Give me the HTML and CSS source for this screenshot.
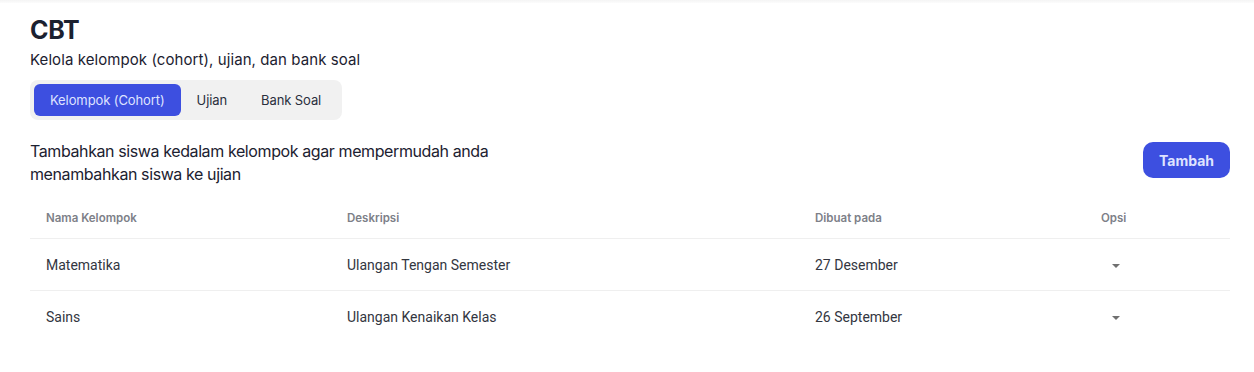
FILE: index.html
```html
<!DOCTYPE html>
<html lang="id">
<head>
<meta charset="utf-8">
<title>CBT</title>
<link rel="stylesheet" href="styles.css">
</head>
<body>
<div class="topbar"></div>
<main class="page">
  <h1 class="title">CBT</h1>
  <p class="subtitle">Kelola kelompok (cohort), ujian, dan bank soal</p>
  <nav class="tabs">
    <button class="tab active">Kelompok (Cohort)</button>
    <button class="tab">Ujian</button>
    <button class="tab">Bank Soal</button>
  </nav>
  <section class="intro">
    <p class="intro-text">Tambahkan siswa kedalam kelompok agar mempermudah anda menambahkan siswa ke ujian</p>
    <button class="btn-add">Tambah</button>
  </section>
  <div class="table">
    <div class="row head">
      <div class="cell c1">Nama Kelompok</div>
      <div class="cell c2">Deskripsi</div>
      <div class="cell c3">Dibuat pada</div>
      <div class="cell c4">Opsi</div>
    </div>
    <div class="row">
      <div class="cell c1">Matematika</div>
      <div class="cell c2">Ulangan Tengan Semester</div>
      <div class="cell c3">27 Desember</div>
      <div class="cell c4"><span class="caret"></span></div>
    </div>
    <div class="row last">
      <div class="cell c1">Sains</div>
      <div class="cell c2">Ulangan Kenaikan Kelas</div>
      <div class="cell c3">26 September</div>
      <div class="cell c4"><span class="caret"></span></div>
    </div>
  </div>
</main>
</body>
</html>
```
FILE: styles.css
```css
* { box-sizing: border-box; }
html, body { margin: 0; padding: 0; background: #fff; }
body { font-family: "Inter", "Noto Sans", sans-serif; color: #1c2130; }
.topbar { height: 3px; background: linear-gradient(#f4f4f4, #fcfcfc); }
.page { padding: 12px 24px 0 30px; }
.title { margin: 0; font-size: 25px; font-weight: 700; line-height: 30px; letter-spacing: -0.3px; color: #1b2130; }
.subtitle { margin: 5px 0 0; font-size: 15px; line-height: 20px; color: #1c2130; letter-spacing: 0.08px; }
.tabs { display: inline-flex; margin-top: 10px; padding: 4px; background: #f1f1f1; border-radius: 8px; gap: 0; }
.tab { border: 0; background: transparent; font-family: inherit; font-size: 13px; color: #2a2f3d; height: 32px; padding: 0 16px; border-radius: 6px; letter-spacing: -0.1px; }
.tab.active { background: #3d4fe0; color: #dfe3ff; }
.tabs .tab:nth-child(2) { padding: 0 18px 0 16px; }
.tabs .tab:nth-child(3) { padding: 0 17px 0 16px; }
.intro { display: flex; justify-content: space-between; align-items: flex-start; margin-top: 20px; width: 1200px; }
.intro-text { margin: 0; width: 480px; font-size: 16px; line-height: 23px; color: #1c2130; letter-spacing: -0.4px; }
.btn-add { border: 0; background: #3d4fe0; color: #dfe3ff; font-family: inherit; font-weight: 700; font-size: 14px; height: 36px; padding: 0 16px; border-radius: 10px; margin-top: 2px; }
.table { width: 1200px; margin-top: 12px; }
.row { display: grid; grid-template-columns: 301px 468px 286px 145px; height: 52px; align-items: center; border-bottom: 1px solid #efefef; }
.row.head { height: 41px; }
.row.last { border-bottom: 0; }
.cell { padding-left: 16px; font-family: "Roboto", sans-serif; font-size: 14px; color: #33363f; }
.head .cell { font-family: "Inter", sans-serif; font-size: 11.5px; font-weight: 600; color: #7d8088; }
.caret { display: inline-block; margin-left: 11px; width: 0; height: 0; border-left: 4px solid transparent; border-right: 4px solid transparent; border-top: 4px solid #707070; vertical-align: middle; }
```
